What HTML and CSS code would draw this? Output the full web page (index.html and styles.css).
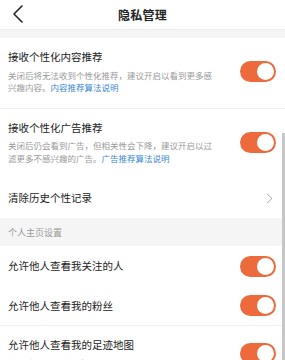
FILE: index.html
```html
<!DOCTYPE html>
<html lang="zh">
<head>
<meta charset="utf-8">
<link rel="stylesheet" href="styles.css">
</head>
<body>
<div class="page">
  <header class="nav">
    <svg class="back" width="12" height="18" viewBox="0 0 12 18"><path d="M10 1 L2 9 L10 17" fill="none" stroke="#222" stroke-width="1.6" stroke-linecap="round" stroke-linejoin="round"/></svg>
    <div class="title">隐私管理</div>
  </header>
  <div class="gap"></div>
  <div class="row row-desc">
    <div class="text">
      <div class="label">接收个性化内容推荐</div>
      <div class="desc">关闭后将无法收到个性化推荐，建议开启以看到更多感兴趣内容。<span class="link">内容推荐算法说明</span></div>
    </div>
    <div class="toggle"><span class="knob"></span></div>
  </div>
  <div class="row row-desc row-ad">
    <div class="text">
      <div class="label">接收个性化广告推荐</div>
      <div class="desc">关闭后仍会看到广告，但相关性会下降，建议开启以过滤更多不感兴趣的广告。<span class="link">广告推荐算法说明</span></div>
    </div>
    <div class="toggle"><span class="knob"></span></div>
  </div>
  <div class="row row-simple">
    <div class="label">清除历史个性记录</div>
    <svg class="chev" width="7" height="11" viewBox="0 0 7 11"><path d="M1 1 L6 5.5 L1 10" fill="none" stroke="#aaa" stroke-width="1"/></svg>
  </div>
  <div class="section">个人主页设置</div>
  <div class="row row-simple">
    <div class="label">允许他人查看我关注的人</div>
    <div class="toggle"><span class="knob"></span></div>
  </div>
  <div class="row row-simple line">
    <div class="label">允许他人查看我的粉丝</div>
    <div class="toggle"><span class="knob"></span></div>
  </div>
  <div class="row row-desc">
    <div class="text">
      <div class="label">允许他人查看我的足迹地图</div>
      <div class="desc">打开后，他人可查看的个人主页的足迹地图，<span class="link">示例</span></div>
    </div>
    <div class="toggle"><span class="knob"></span></div>
  </div>
  <div class="scrollbar"></div>
</div>
</body>
</html>
```
FILE: styles.css
```css
* { box-sizing: border-box; }
html, body { margin: 0; padding: 0; background: #fff; }
body { font-family: "Noto Sans CJK SC", "Noto Sans", sans-serif; color: #222; overflow: hidden; }
.page { position: relative; width: 285px; height: 360px; overflow: hidden; }
.nav { position: relative; height: 30px; display: flex; align-items: center; justify-content: center; border-bottom: 1px solid #ececec; }
.back { position: absolute; left: 12px; top: 5px; }
.title { font-size: 12px; font-weight: bold; letter-spacing: 0.3px; }
.gap { height: 8px; background: #f5f5f5; }
.row { display: flex; align-items: center; justify-content: space-between; padding: 0 8px 0 8px; }
.row-desc { padding-top: 12px; padding-bottom: 14px; border-bottom: 1px solid #f0f0f0; }
.row-ad { border-bottom: none; }
.text { width: 210px; }
.label { font-size: 10.5px; line-height: 14px; color: #222; }
.desc { font-size: 8.5px; line-height: 12.5px; color: #9a9a9a; margin-top: 4.5px; }
.link { color: #3b87d8; }
.row-simple { height: 40px; }
.line { border-bottom: 1px solid #f0f0f0; }
.chev { margin-right: 4px; }
.section { height: 28px; background: #f5f5f5; font-size: 9px; color: #999; display: flex; align-items: center; padding-left: 8px; }
.toggle { width: 36px; height: 21px; border-radius: 11px; background: #ec6a3c; position: relative; flex: none; margin-right: 1px; }
.knob { position: absolute; right: 2px; top: 2px; width: 17px; height: 17px; border-radius: 50%; background: #fff; }
.scrollbar { position: absolute; right: 0; top: 133px; width: 3px; height: 227px; background: #c6c6c6; }
```
